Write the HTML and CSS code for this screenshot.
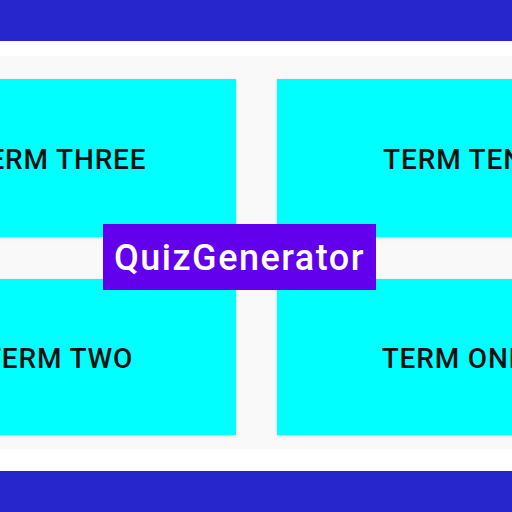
FILE: index.html
```html
<!DOCTYPE html>
<html lang="en">
<head>
    <meta charset="UTF-8">
    <meta name="viewport" content="width=device-width, initial-scale=1.0">
    <title>QuizGenerator</title>
    <link rel="stylesheet" href="styles.css">
</head>
<body>
    <div class="bar"></div>
    <div class="screen">
        <div class="terms">
            <div class="term">TERM THREE</div>
            <div class="term">TERM TEN</div>
            <div class="term">TERM TWO</div>
            <div class="term">TERM ONE</div>
        </div>
        <div class="app-label">QuizGenerator</div>
    </div>
    <div class="bar"></div>
</body>
</html>
```

FILE: styles.css
```css
* {
    margin: 0;
    padding: 0;
    box-sizing: border-box;
}

body {
    width: 512px;
    height: 512px;
    overflow: hidden;
    background-color: #fff;
    font-family: Roboto, "Noto Sans", sans-serif;
}

.bar {
    height: 41px;
    background-color: #2626cc;
}

.screen {
    position: relative;
    height: 430px;
    padding: 15px 0 22px;
}

.terms {
    height: 100%;
    background-color: #f9f9f9;
    padding-top: 23px;
    display: grid;
    grid-template-columns: 354px 354px;
    grid-template-rows: 158px 156px;
    column-gap: 41px;
    row-gap: 42px;
    justify-content: center;
    overflow: hidden;
}

.term {
    background-color: #00ffff;
    box-shadow: 0 1px 3px rgba(0, 0, 0, 0.15);
    display: flex;
    align-items: center;
    justify-content: center;
    padding-top: 3px;
    font-size: 28px;
    font-weight: 500;
    letter-spacing: 0.03em;
    color: #111;
}

.app-label {
    position: absolute;
    top: 183px;
    left: 103px;
    width: 273px;
    height: 66px;
    padding-left: 11px;
    padding-top: 2px;
    display: flex;
    align-items: center;
    background-color: #6200ee;
    color: #fff;
    font-size: 36px;
    font-weight: 500;
    letter-spacing: 1.5px;
}
```
